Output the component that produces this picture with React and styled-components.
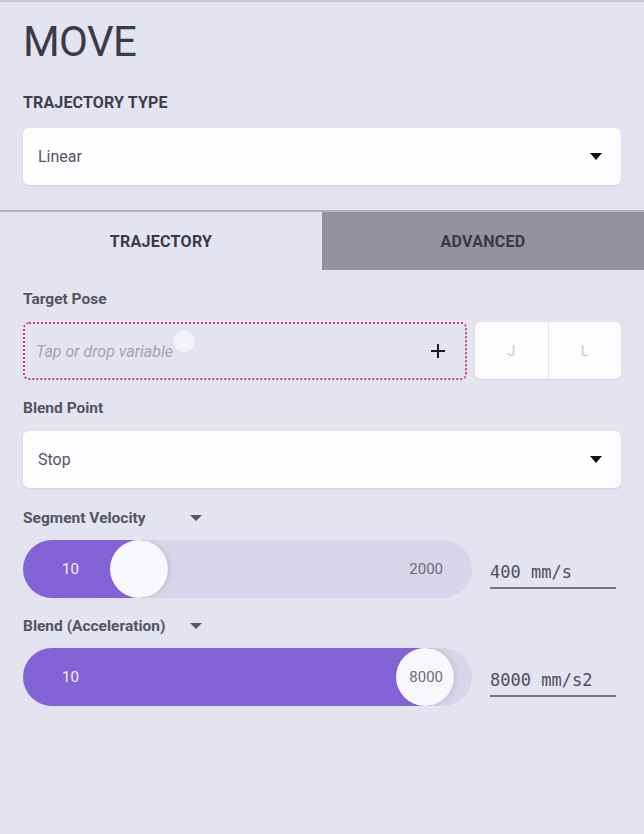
import styled, { createGlobalStyle } from "styled-components";

const GlobalStyle = createGlobalStyle`
  html, body {
    margin: 0;
    padding: 0;
    background: #e4e3f0;
  }
  body {
    font-family: Roboto, "Liberation Sans", sans-serif;
  }
`;

const Page = styled.div`
  width: 644px;
  height: 834px;
  background: #e4e3f0;
  border-top: 2px solid #c9c8d4;
  box-sizing: border-box;
  overflow: hidden;
`;

const Header = styled.div`
  padding: 16px 23px 25px 23px;
`;

const Title = styled.h1`
  margin: 0 0 27px 0;
  font-size: 42px;
  font-weight: 400;
  letter-spacing: -0.6px;
  color: #3b3a47;
  line-height: 48px;
`;

const SectionLabel = styled.div`
  font-size: 16px;
  font-weight: 700;
  color: #3f3e4a;
  letter-spacing: 0.15px;
  margin-bottom: 16px;
`;

const FieldLabel = styled.div`
  display: flex;
  align-items: center;
  font-size: 15.5px;
  font-weight: 700;
  color: #55545f;
  margin: ${(p) => p.$margin || "0 0 14px 0"};
`;

const LabelText = styled.span`
  width: 167px;
`;

const Select = styled.div`
  height: 57px;
  background: #fdfcff;
  border-radius: 6px;
  box-shadow: 0 1px 2px rgba(60, 50, 100, 0.12);
  display: flex;
  align-items: center;
  justify-content: space-between;
  padding: 0 19px 0 15px;
  font-size: 16px;
  color: #56555f;
`;

const Caret = styled.span`
  width: 0;
  height: 0;
  border-left: 6px solid transparent;
  border-right: 6px solid transparent;
  border-top: ${(p) => (p.$small ? 6 : 7)}px solid ${(p) => (p.$small ? "#55545f" : "#111")};
`;

const Tabs = styled.div`
  display: flex;
  border-top: 2px solid #b3b2bc;
  height: 58px;
`;

const Tab = styled.div`
  flex: 1;
  display: flex;
  align-items: center;
  justify-content: center;
  font-size: 16px;
  font-weight: 700;
  letter-spacing: 0.3px;
  color: #3a3944;
  background: ${(p) => (p.$active ? "#e4e3f0" : "#93929d")};
`;

const Body = styled.div`
  padding: 20px 23px 0 23px;
`;

const PoseRow = styled.div`
  display: flex;
  gap: 8px;
  margin-bottom: 19px;
`;

const DropZone = styled.div`
  position: relative;
  flex: 1;
  height: 58px;
  box-sizing: border-box;
  border: 2px dotted #d23f6e;
  border-radius: 6px;
  display: flex;
  align-items: center;
  justify-content: space-between;
  padding: 0 19px 0 11px;
  font-size: 16px;
  font-style: italic;
  color: #a5a4ae;
`;

const Touch = styled.span`
  position: absolute;
  left: 148px;
  top: 6px;
  width: 22px;
  height: 22px;
  border-radius: 50%;
  background: rgba(255, 255, 255, 0.55);
  box-shadow: 0 0 2px rgba(180, 180, 200, 0.4);
`;

const PlusIcon = () => (
  <svg width="16" height="16" viewBox="0 0 16 16">
    <path d="M8 1v14M1 8h14" stroke="#1a1a22" strokeWidth="2" />
  </svg>
);

const Toggle = styled.div`
  width: 146px;
  height: 57px;
  display: flex;
  background: #fdfcff;
  border-radius: 6px;
  box-shadow: 0 1px 2px rgba(60, 50, 100, 0.12);
`;

const ToggleOption = styled.div`
  flex: 1;
  display: flex;
  align-items: center;
  justify-content: center;
  font-size: 15px;
  color: #cfced6;
  & + & {
    border-left: 1px solid #e2e1ea;
  }
`;

const SliderRow = styled.div`
  display: flex;
  align-items: center;
  gap: 18px;
`;

const Track = styled.div`
  position: relative;
  width: 449px;
  height: 58px;
  border-radius: 29px;
  background: #d7d5e9;
  overflow: hidden;
`;

const Fill = styled.div`
  position: absolute;
  left: 0;
  top: 0;
  bottom: 0;
  background: #8463d6;
`;

const Thumb = styled.div`
  position: absolute;
  top: 0;
  width: 58px;
  height: 58px;
  border-radius: 50%;
  background: #f8f7fc;
  box-shadow: 2px 0 4px rgba(80, 60, 140, 0.15);
`;

const TrackLabels = styled.div`
  position: relative;
  height: 100%;
  display: flex;
  align-items: center;
  justify-content: space-between;
  padding: 0 29px 0 39px;
  font-size: 15px;
`;

const MinLabel = styled.span`
  color: #f4f1ff;
`;

const MaxLabel = styled.span`
  color: #6d6c77;
`;

const ValueField = styled.div`
  width: 126px;
  height: 40px;
  box-sizing: border-box;
  border-bottom: 2px solid #75747e;
  display: flex;
  align-items: center;
  padding-top: 8px;
  font-family: "DejaVu Sans Mono", "Liberation Mono", monospace;
  font-size: 17px;
  color: #4f4e5a;
`;

// thumb: distance of the knob centre from the track's left edge
const Slider = ({ min, max, value, unit, thumb }) => (
  <SliderRow>
    <Track>
      <Fill style={{ width: thumb + 6 + "px" }} />
      <Thumb style={{ left: thumb - 29 + "px" }} />
      <TrackLabels>
        <MinLabel>{min}</MinLabel>
        <MaxLabel>{max}</MaxLabel>
      </TrackLabels>
    </Track>
    <ValueField>
      {value} {unit}
    </ValueField>
  </SliderRow>
);

export default function App() {
  return (
    <Page>
      <GlobalStyle />
      <Header>
        <Title>MOVE</Title>
        <SectionLabel>TRAJECTORY TYPE</SectionLabel>
        <Select>
          Linear
          <Caret />
        </Select>
      </Header>
      <Tabs>
        <Tab $active>TRAJECTORY</Tab>
        <Tab>ADVANCED</Tab>
      </Tabs>
      <Body>
        <FieldLabel>Target Pose</FieldLabel>
        <PoseRow>
          <DropZone>
            Tap or drop variable
            <Touch />
            <PlusIcon />
          </DropZone>
          <Toggle>
            <ToggleOption>J</ToggleOption>
            <ToggleOption>L</ToggleOption>
          </Toggle>
        </PoseRow>
        <FieldLabel>Blend Point</FieldLabel>
        <Select>
          Stop
          <Caret />
        </Select>
        <FieldLabel $margin="21px 0 13px 0">
          <LabelText>Segment Velocity</LabelText>
          <Caret $small />
        </FieldLabel>
        <Slider min={10} max={2000} value={400} unit="mm/s" thumb={116} />
        <FieldLabel $margin="19px 0 13px 0">
          <LabelText>Blend (Acceleration)</LabelText>
          <Caret $small />
        </FieldLabel>
        <Slider min={10} max={8000} value={8000} unit="mm/s2" thumb={402} />
      </Body>
    </Page>
  );
}
